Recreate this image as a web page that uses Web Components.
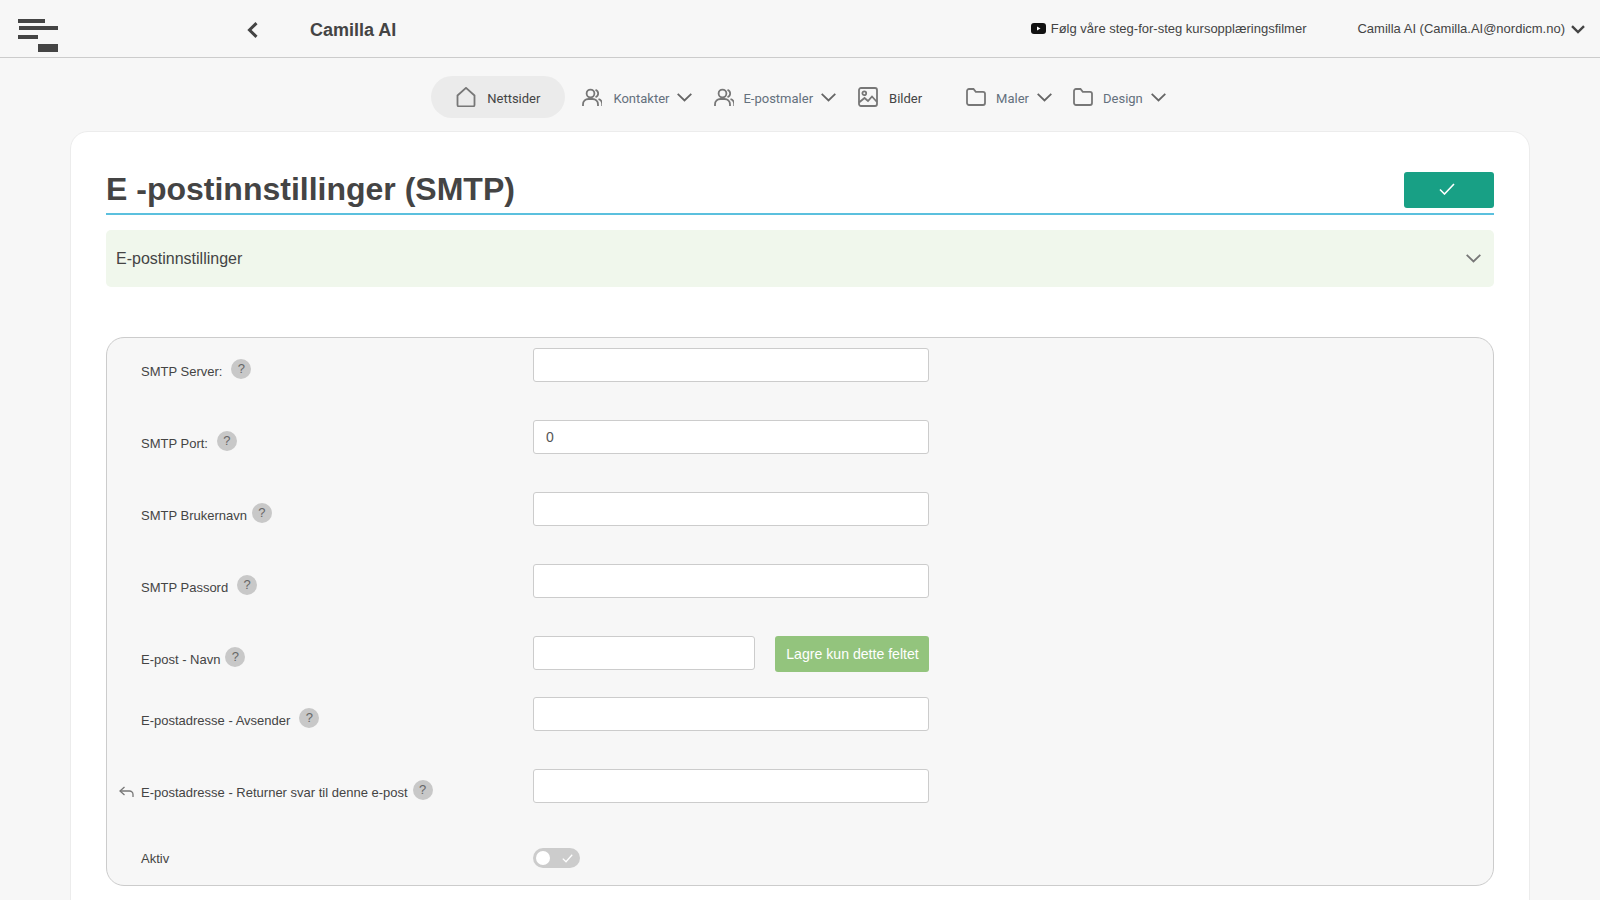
<!DOCTYPE html>
<html lang="no">
<head>
<meta charset="utf-8">
<title>E-postinnstillinger (SMTP)</title>
<style>
    html, body { margin: 0; height: 100%; overflow: hidden; }
    body { background: #f7f7f7; font-family: "Liberation Sans", Arial, sans-serif; color: #444; }
</style>
</head>
<body>
<app-header title-text="Camilla AI" user="Camilla AI (Camilla.AI@nordicm.no)" help="Følg våre steg-for-steg kursopplæringsfilmer"></app-header>

<app-nav>
    <nav-item icon="house" active style="--gap:11px;--pl:25px;--pr:25px">Nettsider</nav-item>
    <nav-item icon="users" menu style="--ml:17px">Kontakter</nav-item>
    <nav-item icon="users" menu style="--ml:22px;--gap:9px">E-postmaler</nav-item>
    <nav-item icon="image" dark style="--ml:22px;--gap:11px">Bilder</nav-item>
    <nav-item icon="folder" menu style="--ml:44px;--gap:10px">Maler</nav-item>
    <nav-item icon="folder" menu style="--ml:21px;--gap:10px">Design</nav-item>
</app-nav>

<page-card>
    <title-bar>E -postinnstillinger (SMTP)</title-bar>
    <accordion-bar>E-postinnstillinger</accordion-bar>
    <form-panel>
        <form-row label="SMTP Server:" gap="9"><text-field></text-field></form-row>
        <form-row label="SMTP Port:" gap="9"><text-field value="0"></text-field></form-row>
        <form-row label="SMTP Brukernavn" gap="5"><text-field></text-field></form-row>
        <form-row label="SMTP Passord" gap="9"><text-field></text-field></form-row>
        <form-row label="E-post - Navn" gap="5" height="61">
            <text-field style="width:222px"></text-field>
            <save-field-button>Lagre kun dette feltet</save-field-button>
        </form-row>
        <form-row label="E-postadresse - Avsender" gap="9"><text-field></text-field></form-row>
        <form-row label="E-postadresse - Returner svar til denne e-post" gap="5" reply height="79"><text-field></text-field></form-row>
        <form-row label="Aktiv" nohelp height="20"><toggle-switch></toggle-switch></form-row>
    </form-panel>
</page-card>

<script>
const ICONS = {
    house: '<path d="M1.5 8.5 10 .9l8.5 7.6V18a1.5 1.5 0 0 1-1.5 1.4H3A1.5 1.5 0 0 1 1.5 18z"/>',
    users: '<circle cx="8.5" cy="6.5" r="3.9"/><path d="M1 19v-1.5C1 14 3.5 12 6.5 12h4c3 0 5.5 2 5.5 5.5V19"/><path d="M13.5 2.8a3.9 3.9 0 0 1 0 7.4"/><path d="M16.5 12.2c2.2.6 3.7 2.6 3.7 5V19"/>',
    image: '<rect x="1" y="1" width="18" height="18" rx="2"/><circle cx="6.3" cy="6.3" r="1.9"/><path d="M1 15.5 6.5 11l3.5 3 4-4.5 5 5.5"/>',
    folder: '<path d="M1 4a2 2 0 0 1 2-2h4.5l2.3 2.8H17a2 2 0 0 1 2 2V16a2 2 0 0 1-2 2H3a2 2 0 0 1-2-2z"/>'
};
const CHEVRON = '<svg width="15" height="9" viewBox="0 0 15 9" fill="none" stroke="currentColor" stroke-width="1.8"><path d="M.7.8 7.5 7.5 14.300.8"/></svg>';

class AppHeader extends HTMLElement {
    constructor() {
        super();
        this.attachShadow({ mode: 'open' }).innerHTML = `
        <style>
            :host { display: flex; align-items: center; height: 57px; border-bottom: 1px solid #ccc; font-size: 13px; color: #444; }
            .logo { display: block; align-self: flex-start; margin: 19px 0 0 18px; }
            .back { display: block; margin: 2px 0 0 189px; }
            h1 { margin: 3px 0 0 52px; font-size: 18px; font-weight: bold; color: #444; }
            .help { margin-left: auto; display: flex; align-items: center; gap: 5px; }
            .user { margin-left: 51px; }
            .chev { display: block; margin: 2px 15px 0 6px; }
        </style>
        <svg class="logo" width="40" height="33" viewBox="0 0 40 33" fill="#444">
            <rect x="0" y="0" width="27" height="4"/><rect x="1" y="7" width="39" height="4"/><rect x="0" y="16" width="20" height="4"/><rect x="20" y="25" width="20" height="8"/>
        </svg>
        <svg class="back" width="11" height="16" viewBox="0 0 11 16" fill="none" stroke="#444" stroke-width="3"><path d="M9.5 1.2 2.5 8l7 6.8"/></svg>
        <h1>${this.getAttribute('title-text')}</h1>
        <span class="help">
            <svg width="15" height="11" viewBox="0 0 15 11"><rect width="15" height="11" rx="3" fill="#111"/><path d="M6 3.5v4l3.5-2z" fill="#fff"/></svg>
            <span>${this.getAttribute('help')}</span>
        </span>
        <span class="user">${this.getAttribute('user')}</span>
        <svg class="chev" width="14" height="9" viewBox="0 0 14 9" fill="none" stroke="#444" stroke-width="2.4"><path d="M1 1.2 7 7l6-5.800"/></svg>
        `;
    }
}
customElements.define('app-header', AppHeader);

class AppNav extends HTMLElement {
    constructor() {
        super();
        this.attachShadow({ mode: 'open' }).innerHTML = `
        <style>
            :host { display: flex; justify-content: center; padding: 18px 3px 13px 0; }
        </style>
        <slot></slot>`;
    }
}
customElements.define('app-nav', AppNav);

class NavItem extends HTMLElement {
    constructor() {
        super();
        const name = this.getAttribute('icon');
        this.attachShadow({ mode: 'open' }).innerHTML = `
        <style>
            :host { display: flex; align-items: center; height: 42px; margin-left: var(--ml, 0); padding: 0 var(--pr, 0) 0 var(--pl, 0); font-family: Roboto, "Liberation Sans", sans-serif; font-size: 13px; color: #64707d; border-radius: 21px; }
            :host([active]) { background: #ebebeb; color: #444; }
            :host([dark]) { color: #444; }
            .ico { display: block; margin-right: var(--gap, 11px); }
            .txt { padding-top: 2px; }
            .chev { display: block; margin: 1px 0 0 8px; color: #666; line-height: 0; }
        </style>
        <svg class="ico" width="20" height="20" viewBox="0 0 20 20" fill="none" stroke="#777" stroke-width="1.8">${ICONS[name]}</svg>
        <span class="txt"><slot></slot></span>
        ${this.hasAttribute('menu') ? `<span class="chev">${CHEVRON}</span>` : ''}`;
    }
}
customElements.define('nav-item', NavItem);

class PageCard extends HTMLElement {
    constructor() {
        super();
        this.attachShadow({ mode: 'open' }).innerHTML = `
        <style>
            :host { display: block; box-sizing: border-box; width: 1460px; margin-left: 70px; padding: 40px 35px; background: #fff; border: 1px solid #ececec; border-radius: 18px; }
        </style>
        <slot></slot>`;
    }
}
customElements.define('page-card', PageCard);

class TitleBar extends HTMLElement {
    constructor() {
        super();
        this.attachShadow({ mode: 'open' }).innerHTML = `
        <style>
            :host { display: flex; justify-content: space-between; height: 41px; border-bottom: 2px solid #5bc0de; }
            h2 { margin: 0; font-size: 32px; line-height: 34px; font-weight: bold; color: #444; }
            button { width: 90px; height: 36px; border: 0; border-radius: 3px; background: #18a085; display: flex; align-items: center; justify-content: center; padding: 0 4px 2px 0; }
        </style>
        <h2><slot></slot></h2>
        <button aria-label="Lagre"><svg width="16" height="12" viewBox="0 0 16 12" fill="none" stroke="#fff" stroke-width="1.6"><path d="M1 6.5 5.5 11 15 1"/></svg></button>`;
    }
}
customElements.define('title-bar', TitleBar);

class AccordionBar extends HTMLElement {
    constructor() {
        super();
        this.attachShadow({ mode: 'open' }).innerHTML = `
        <style>
            :host { display: flex; align-items: center; justify-content: space-between; height: 57px; margin-top: 15px; padding: 0 13px 0 10px; background: #f0f7ec; border-radius: 5px; font-size: 16px; color: #444; }
            span { color: #777; display: block; line-height: 0; }
        </style>
        <slot></slot><span>${CHEVRON}</span>`;
    }
}
customElements.define('accordion-bar', AccordionBar);

class FormPanel extends HTMLElement {
    constructor() {
        super();
        this.attachShadow({ mode: 'open' }).innerHTML = `
        <style>
            :host { display: block; margin-top: 50px; padding: 10px 0 17px 34px; background: #f7f7f7; border: 1px solid #ccc; border-radius: 18px; }
        </style>
        <slot></slot>`;
    }
}
customElements.define('form-panel', FormPanel);

class FormRow extends HTMLElement {
    constructor() {
        super();
        const h = this.getAttribute('height') || 72;
        const gap = this.getAttribute('gap') || 8;
        const help = this.hasAttribute('nohelp') ? '' : '<help-badge></help-badge>';
        const reply = this.hasAttribute('reply')
            ? '<svg class="reply" width="15" height="12" viewBox="0 0 15 12" fill="none" stroke="#777" stroke-width="1.3"><path d="M5.5 1 1 5l4.5 4"/><path d="M1 5h9.5a3.5 3.5 0 0 1 3.5 3.5V11"/></svg>'
            : '';
        this.attachShadow({ mode: 'open' }).innerHTML = `
        <style>
            :host { display: grid; grid-template-columns: 392px 396px; height: ${h}px; font-size: 13px; color: #444; }
            .label { display: flex; align-items: flex-start; height: 34px; padding-top: 11px; box-sizing: border-box; line-height: 26px; }
            :host([nohelp]) .label { padding-top: 0; height: 20px; line-height: 22px; }
            help-badge { margin: 0 0 0 ${gap}px; }
            .reply { margin: 6px 7px 0 -22px; flex: none; }
            .field { display: flex; justify-content: space-between; align-items: flex-start; }
        </style>
        <div class="label">${reply}<span>${this.getAttribute('label')}</span>${help}</div>
        <div class="field"><slot></slot></div>`;
    }
}
customElements.define('form-row', FormRow);

class HelpBadge extends HTMLElement {
    constructor() {
        super();
        this.attachShadow({ mode: 'open' }).innerHTML = `
        <style>
            :host { display: flex; align-items: center; justify-content: center; flex: none; width: 20px; height: 20px; border-radius: 50%; background: #c8c8c8; color: #666; font-size: 13px; line-height: 18px; }
        </style>?`;
    }
}
customElements.define('help-badge', HelpBadge);

class TextField extends HTMLElement {
    constructor() {
        super();
        const value = this.getAttribute('value') || '';
        this.attachShadow({ mode: 'open' }).innerHTML = `
        <style>
            :host { display: block; width: 396px; height: 34px; }
            input { display: block; box-sizing: border-box; width: 100%; height: 100%; padding: 0 12px; background: #fff; border: 1px solid #ccc; border-radius: 3px; font: 14px "Liberation Sans", Arial, sans-serif; color: #555; outline: none; }
        </style>
        <input type="text" value="${value}">`;
    }
}
customElements.define('text-field', TextField);

class SaveFieldButton extends HTMLElement {
    constructor() {
        super();
        this.attachShadow({ mode: 'open' }).innerHTML = `
        <style>
            :host { display: block; }
            button { display: block; width: 154px; height: 36px; padding: 0 0 0 1px; border: 0; border-radius: 3px; background: #93c47d; color: #fff; font: 14.1px "Liberation Sans", Arial, sans-serif; }
        </style>
        <button><slot></slot></button>`;
    }
}
customElements.define('save-field-button', SaveFieldButton);

class ToggleSwitch extends HTMLElement {
    constructor() {
        super();
        this.attachShadow({ mode: 'open' }).innerHTML = `
        <style>
            :host { display: flex; align-items: center; justify-content: space-between; box-sizing: border-box; width: 47px; height: 20px; padding: 0 7px 0 3px; background: #ccc; border-radius: 10px; }
            i { display: block; width: 14px; height: 14px; background: #fff; border-radius: 50%; }
            svg { display: block; }
        </style>
        <i></i>
        <svg width="11" height="9" viewBox="0 0 11 9" fill="none" stroke="#fff" stroke-width="1.3"><path d="M.8 4.6 4 7.8 10.2.8"/></svg>`;
    }
}
customElements.define('toggle-switch', ToggleSwitch);
</script>
</body>
</html>
